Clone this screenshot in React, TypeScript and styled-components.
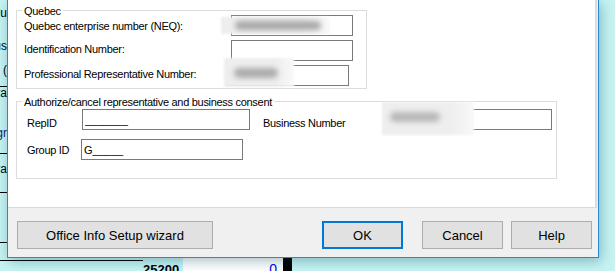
import React from 'react';
import styled, { createGlobalStyle } from 'styled-components';

const GlobalStyle = createGlobalStyle`
  html, body {
    margin: 0;
    padding: 0;
    background: #c6f4f3;
  }
  body {
    font-family: 'Liberation Sans', Arial, sans-serif;
  }
`;

type StripRow = { h: number; text?: string; pt?: number; line?: boolean; color?: string };

const stripRows: StripRow[] = [
  { h: 30, text: 'Valu', pt: 7 },
  { h: 32, text: 'Status', pt: 10 },
  { h: 24, text: '(', pt: 2, line: true },
  { h: 40, text: 'Contra', pt: 0 },
  { h: 26, text: 'Progr', pt: 0, line: true, color: '#1a1a5a' },
  { h: 38, text: 'Contra', pt: 9, line: true },
  { h: 49, line: true },
  { h: 17, line: true },
  { h: 10 },
];

type Smudge = { x: number; y: number; w: number; h: number; bx: number; by: number; bw: number; bh: number; tone: string };

export default function App() {
  return (
    <>
      <GlobalStyle />
      <Desktop>
        <LeftStrip>
          {stripRows.map((r, i) => (
            <StripCell key={i} $h={r.h} $line={!!r.line}>
              {r.text && <StripText $pt={r.pt || 0} $color={r.color || '#000'}>{r.text}</StripText>}
            </StripCell>
          ))}
        </LeftStrip>

        <Dialog>
          <Panel>
            <Group $w={351}>
              <Legend>Quebec</Legend>
              <QuebecBody>
                <Row>
                  <Label $w={207} $dy={0}>Quebec enterprise number (NEQ):</Label>
                  <Field
                    w={122}
                    smudge={{ x: -10, y: 2, w: 109, h: 17, bx: 14, by: 4, bw: 86, bh: 9, tone: '#a9a9a9' }}
                  />
                </Row>
                <Row>
                  <Label $w={207} $dy={-2}>Identification Number:</Label>
                  <Field w={122} />
                </Row>
                <Row>
                  <Label $w={203} $dy={-2}>Professional Representative Number:</Label>
                  <Field
                    w={122}
                    smudge={{ x: -3, y: -7, w: 70, h: 29, bx: 10, by: 10, bw: 44, bh: 10, tone: '#acacac' }}
                  />
                </Row>
              </QuebecBody>
            </Group>

            <Group $w={541} $top={7}>
              <Legend>Authorize/cancel representative and business consent</Legend>
              <ConsentBody>
                <Row>
                  <Label $w={55} $dy={3}>RepID</Label>
                  <Field w={168} value="_______" />
                  <Label $w={121} $dy={3} $ml={13}>Business Number</Label>
                  <Field
                    w={168}
                    smudge={{ x: -2, y: -7, w: 92, h: 33, bx: 8, by: 10, bw: 50, bh: 10, tone: '#b8b8b8' }}
                  />
                </Row>
                <Row>
                  <Label $w={54} $dy={0}>Group ID</Label>
                  <Field w={162} value="G_____" />
                </Row>
              </ConsentBody>
            </Group>
          </Panel>

          <Footer>
            <Button $w={196}>Office Info Setup wizard</Button>
            <Spacer />
            <Button $w={81} $primary>OK</Button>
            <Button $w={81} $ml={19}>Cancel</Button>
            <Button $w={81} $ml={8}>Help</Button>
          </Footer>
        </Dialog>

        <BottomRow>
          <LineSeg />
          <Amount>25200</Amount>
          <ZeroCell>0</ZeroCell>
          <BlackBar />
        </BottomRow>
      </Desktop>
    </>
  );
}

function Field({ w, value = '', smudge }: { w: number; value?: string; smudge?: Smudge }) {
  return (
    <FieldWrap>
      <TextBox $w={w} readOnly value={value} />
      {smudge && (
        <SmudgeBox style={{ left: smudge.x, top: smudge.y, width: smudge.w, height: smudge.h }}>
          <Blob
            style={{ left: smudge.bx, top: smudge.by, width: smudge.bw, height: smudge.bh, background: smudge.tone }}
          />
        </SmudgeBox>
      )}
    </FieldWrap>
  );
}

const Desktop = styled.div`
  width: 615px;
  height: 271px;
  overflow: hidden;
  display: grid;
  grid-template-columns: 7px 592px 16px;
  grid-template-rows: 258px 13px;
  background: #c6f4f3;
`;

const LeftStrip = styled.div`
  grid-column: 1;
  grid-row: 1 / 3;
  display: flex;
  flex-direction: column;
  overflow: hidden;
`;

const StripCell = styled.div<{ $h: number; $line: boolean }>`
  flex: 0 0 auto;
  height: ${(p) => p.$h}px;
  border-bottom: ${(p) => (p.$line ? '1px solid #000' : 'none')};
  display: flex;
  justify-content: flex-end;
  align-items: flex-start;
  overflow: hidden;
`;

const StripText = styled.div<{ $pt: number; $color: string }>`
  margin-top: ${(p) => p.$pt}px;
  font-size: 12px;
  line-height: 12px;
  white-space: nowrap;
  color: ${(p) => p.$color};
`;

const Dialog = styled.div`
  grid-column: 2;
  grid-row: 1;
  position: relative;
  z-index: 1;
  box-sizing: border-box;
  display: flex;
  flex-direction: column;
  background: #f0f0f0;
  border: 1px solid #2a87d8;
  border-top: none;
  box-shadow: 2px 3px 12px rgba(0, 70, 90, 0.35);
`;

const Panel = styled.div`
  box-sizing: border-box;
  height: 208px;
  margin-right: 1px;
  padding: 5px 0 0 8px;
  background: #fff;
  border-right: 2px solid #dcdcdc;
  border-bottom: 1px solid #dadada;
`;

const Group = styled.fieldset<{ $w: number; $top?: number }>`
  box-sizing: border-box;
  width: ${(p) => p.$w}px;
  min-width: 0;
  margin: ${(p) => p.$top || 0}px 0 0 0;
  padding: 0;
  border: 1px solid #dcdcdc;
`;

const Legend = styled.legend`
  margin-left: 5px;
  padding: 2px 2px 0;
  font-size: 11px;
  line-height: 8px;
  letter-spacing: -0.3px;
  color: #000;
  white-space: nowrap;
`;

const QuebecBody = styled.div`
  display: flex;
  flex-direction: column;
  gap: 4px;
  padding: 0 0 2px 7px;
`;

const ConsentBody = styled.div`
  display: flex;
  flex-direction: column;
  gap: 9px;
  padding: 3px 0 18px 10px;
`;

const Row = styled.div`
  display: flex;
  align-items: center;
  height: 21px;
`;

const Label = styled.div<{ $w: number; $dy: number; $ml?: number }>`
  flex: 0 0 auto;
  width: ${(p) => p.$w}px;
  margin-left: ${(p) => p.$ml || 0}px;
  padding: ${(p) => (p.$dy > 0 ? p.$dy * 2 : 0)}px 0 ${(p) => (p.$dy < 0 ? -p.$dy * 2 : 0)}px;
  font-size: 11px;
  line-height: 14px;
  letter-spacing: -0.3px;
  color: #000;
  white-space: nowrap;
`;

const FieldWrap = styled.div`
  position: relative;
  flex: 0 0 auto;
  display: flex;
`;

const TextBox = styled.input<{ $w: number }>`
  box-sizing: border-box;
  width: ${(p) => p.$w}px;
  height: 21px;
  margin: 0;
  padding: 0 2px;
  border: 1px solid #7a7a7a;
  border-radius: 0;
  background: #fff;
  font-family: 'Liberation Sans', Arial, sans-serif;
  font-size: 11px;
  color: #000;
  outline: none;
`;

const SmudgeBox = styled.div`
  position: absolute;
  background: linear-gradient(to right, #eeeeee 75%, #f9f9f9);
  filter: blur(1px);
  overflow: visible;
`;

const Blob = styled.div`
  position: absolute;
  border-radius: 5px;
  filter: blur(2.5px);
`;

const Footer = styled.div`
  flex: 1;
  display: flex;
  align-items: flex-start;
  padding: 13px 6px 0 9px;
`;

const Spacer = styled.div`
  flex: 1;
`;

const Button = styled.button<{ $w: number; $primary?: boolean; $ml?: number }>`
  box-sizing: border-box;
  width: ${(p) => p.$w}px;
  height: 28px;
  margin: 0 0 0 ${(p) => p.$ml || 0}px;
  padding: 0;
  background: #e1e1e1;
  border: ${(p) => (p.$primary ? '2px solid #0078d7' : '1px solid #adadad')};
  border-radius: 0;
  font-family: 'Liberation Sans', Arial, sans-serif;
  font-size: 13px;
  color: #000;
`;

const BottomRow = styled.div`
  grid-column: 2 / 4;
  grid-row: 2;
  display: flex;
  align-items: stretch;
  overflow: hidden;
`;

const LineSeg = styled.div`
  flex: 0 0 136px;
  margin-top: 2px;
  border-top: 1px solid #000;
`;

const Amount = styled.div`
  flex: 0 0 40px;
  padding-top: 5px;
  font-size: 13px;
  font-weight: bold;
  line-height: 13px;
  color: #000;
`;

const ZeroCell = styled.div`
  flex: 0 0 100px;
  box-sizing: border-box;
  padding: 5px 6px 0 0;
  background: #fff;
  text-align: right;
  font-size: 14px;
  line-height: 13px;
  color: #0000ee;
`;

const BlackBar = styled.div`
  flex: 0 0 9px;
  background: #000;
`;
